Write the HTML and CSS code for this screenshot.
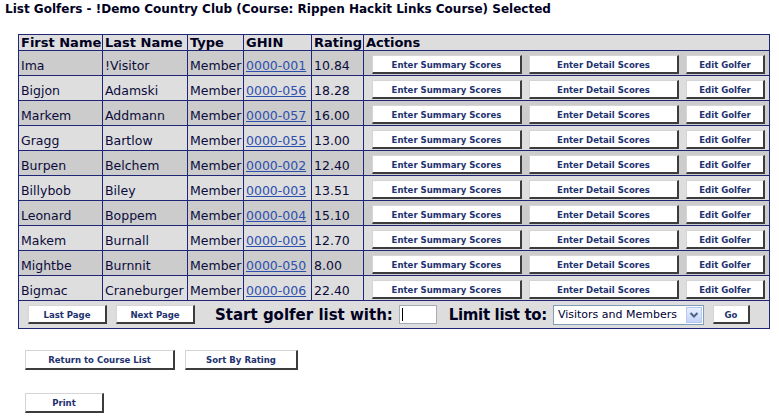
FILE: index.html
```html
<!DOCTYPE html>
<html>
<head>
<meta charset="utf-8">
<title>List Golfers</title>
<link rel="stylesheet" href="styles.css">
</head>
<body>
<h1 class="title">List Golfers - !Demo Country Club (Course: Rippen Hackit Links Course) Selected</h1>
<table class="golfers">
  <colgroup>
    <col class="c-first"><col class="c-last"><col class="c-type"><col class="c-ghin"><col class="c-rating"><col class="c-actions">
  </colgroup>
  <thead>
    <tr><th>First Name</th><th>Last Name</th><th>Type</th><th>GHIN</th><th>Rating</th><th>Actions</th></tr>
  </thead>
  <tbody>
    <tr class="dark"><td>Ima</td><td>!Visitor</td><td>Member</td><td><a href="#">0000-001</a></td><td>10.84</td><td class="actions"><div class="btns"><button class="btn wide">Enter Summary Scores</button><button class="btn wide">Enter Detail Scores</button><button class="btn narrow">Edit Golfer</button></div></td></tr>
    <tr class="light"><td>Bigjon</td><td>Adamski</td><td>Member</td><td><a href="#">0000-056</a></td><td>18.28</td><td class="actions"><div class="btns"><button class="btn wide">Enter Summary Scores</button><button class="btn wide">Enter Detail Scores</button><button class="btn narrow">Edit Golfer</button></div></td></tr>
    <tr class="dark"><td>Markem</td><td>Addmann</td><td>Member</td><td><a href="#">0000-057</a></td><td>16.00</td><td class="actions"><div class="btns"><button class="btn wide">Enter Summary Scores</button><button class="btn wide">Enter Detail Scores</button><button class="btn narrow">Edit Golfer</button></div></td></tr>
    <tr class="light"><td>Gragg</td><td>Bartlow</td><td>Member</td><td><a href="#">0000-055</a></td><td>13.00</td><td class="actions"><div class="btns"><button class="btn wide">Enter Summary Scores</button><button class="btn wide">Enter Detail Scores</button><button class="btn narrow">Edit Golfer</button></div></td></tr>
    <tr class="dark"><td>Burpen</td><td>Belchem</td><td>Member</td><td><a href="#">0000-002</a></td><td>12.40</td><td class="actions"><div class="btns"><button class="btn wide">Enter Summary Scores</button><button class="btn wide">Enter Detail Scores</button><button class="btn narrow">Edit Golfer</button></div></td></tr>
    <tr class="light"><td>Billybob</td><td>Biley</td><td>Member</td><td><a href="#">0000-003</a></td><td>13.51</td><td class="actions"><div class="btns"><button class="btn wide">Enter Summary Scores</button><button class="btn wide">Enter Detail Scores</button><button class="btn narrow">Edit Golfer</button></div></td></tr>
    <tr class="dark"><td>Leonard</td><td>Boppem</td><td>Member</td><td><a href="#">0000-004</a></td><td>15.10</td><td class="actions"><div class="btns"><button class="btn wide">Enter Summary Scores</button><button class="btn wide">Enter Detail Scores</button><button class="btn narrow">Edit Golfer</button></div></td></tr>
    <tr class="light"><td>Makem</td><td>Burnall</td><td>Member</td><td><a href="#">0000-005</a></td><td>12.70</td><td class="actions"><div class="btns"><button class="btn wide">Enter Summary Scores</button><button class="btn wide">Enter Detail Scores</button><button class="btn narrow">Edit Golfer</button></div></td></tr>
    <tr class="dark"><td>Mightbe</td><td>Burnnit</td><td>Member</td><td><a href="#">0000-050</a></td><td>8.00</td><td class="actions"><div class="btns"><button class="btn wide">Enter Summary Scores</button><button class="btn wide">Enter Detail Scores</button><button class="btn narrow">Edit Golfer</button></div></td></tr>
    <tr class="light"><td>Bigmac</td><td>Craneburger</td><td>Member</td><td><a href="#">0000-006</a></td><td>22.40</td><td class="actions"><div class="btns"><button class="btn wide">Enter Summary Scores</button><button class="btn wide">Enter Detail Scores</button><button class="btn narrow">Edit Golfer</button></div></td></tr>
    <tr class="foot">
      <td colspan="6">
        <div class="footbar">
          <button class="btn narrow">Last Page</button>
          <button class="btn narrow">Next Page</button>
          <span class="big-label start">Start golfer list with:</span>
          <div class="textbox" role="textbox"><span class="caret"></span></div>
          <span class="big-label limit">Limit list to:</span>
          <div class="select" role="listbox">
            <span class="select-text">Visitors and Members</span>
            <span class="select-arrow"><svg width="10" height="8" viewBox="0 0 10 8"><path d="M1.5 2 L5 5.5 L8.5 2" fill="none" stroke="#4d6185" stroke-width="2"/></svg></span>
          </div>
          <button class="btn go">Go</button>
        </div>
      </td>
    </tr>
  </tbody>
</table>
<div class="bottom-row">
  <button class="btn wide tall">Return to Course List</button>
  <button class="btn sort tall">Sort By Rating</button>
</div>
<div class="print-row">
  <button class="btn narrow tall">Print</button>
</div>
</body>
</html>
```

FILE: styles.css
```css
html, body {
  background: #ffffff;
}
body {
  margin: 0;
  padding: 1px 0 0 5px;
  font-family: "DejaVu Sans", Verdana, sans-serif;
  color: #0b0b3b;
}
.title {
  margin: 0;
  font-size: 12px;
  line-height: 16px;
  font-weight: bold;
  color: #000022;
}
.golfers {
  margin: 17px 0 0 13px;
  border-collapse: collapse;
  table-layout: fixed;
  width: 751px;
  font-size: 12.5px;
}
.c-first { width: 84px; }
.c-last { width: 85px; }
.c-type { width: 56px; }
.c-ghin { width: 68px; }
.c-rating { width: 52px; }
.c-actions { width: 406px; }
.golfers th, .golfers td {
  border: 1px solid #1f2677;
  text-align: left;
  white-space: nowrap;
  overflow: hidden;
}
.golfers th {
  background: #dddddd;
  height: 15px;
  padding: 0 1px 0 2px;
  line-height: 15px;
  font-size: 13px;
  font-weight: bold;
  color: #000022;
  vertical-align: middle;
}
.golfers tbody tr {
  height: 25px;
}
.golfers td {
  padding: 4px 1px 0 2px;
  vertical-align: middle;
}
.golfers tr.dark td { background: #cccccc; }
.golfers tr.light td { background: #dedede; }
.golfers tr.foot {
  height: 28px;
}
.golfers tr.foot td {
  background: #dddddd;
  padding: 0;
}
.golfers a {
  color: #2d4fae;
  text-decoration: underline;
}
.golfers td.actions { padding: 3px 0 0 0; }
.btns {
  display: flex;
  gap: 7px;
  padding-left: 8px;
  align-items: center;
}
.btn {
  box-sizing: border-box;
  height: 19px;
  padding: 0;
  margin: 0;
  background: #ffffff;
  border-style: solid;
  border-width: 1px 2px 2px 1px;
  border-color: #d4d4d4 #3c3c3c #3c3c3c #d4d4d4;
  font-family: "DejaVu Sans Condensed", "DejaVu Sans", sans-serif;
  font-stretch: condensed;
  font-weight: bold;
  font-size: 9.5px;
  color: #1e3270;
  text-align: center;
  cursor: pointer;
}
.btn.wide { width: 150px; }
.btn.narrow { width: 79px; }
.btn.sort { width: 113px; }
.btn.go { width: 37px; }
.btn.tall { height: 20px; }
.footbar {
  display: flex;
  align-items: center;
  padding-left: 9px;
}
.footbar .btn + .btn { margin-left: 9px; }
.big-label {
  font-size: 15px;
  font-weight: bold;
  color: #000022;
  white-space: nowrap;
}
.start { margin-left: 20px; }
.textbox {
  box-sizing: border-box;
  width: 38px;
  height: 19px;
  margin-left: 6px;
  background: #ffffff;
  border: 1px solid #a5acb5;
  display: flex;
  align-items: center;
  padding-left: 2px;
}
.caret {
  width: 1px;
  height: 13px;
  background: #000000;
}
.limit {
  margin-left: 12px;
  letter-spacing: -0.35px;
}
.select {
  box-sizing: border-box;
  width: 151px;
  height: 20px;
  margin-left: 6px;
  background: #ffffff;
  border: 1px solid #7f9db9;
  display: flex;
  align-items: center;
  justify-content: space-between;
  padding: 0 1px 0 4px;
}
.select-text {
  font-size: 11px;
  color: #000033;
  white-space: nowrap;
}
.select-arrow {
  box-sizing: border-box;
  width: 16px;
  height: 16px;
  border: 1px solid #b5c7ef;
  background: linear-gradient(#e8effd, #c4d4f8);
  display: flex;
  align-items: center;
  justify-content: center;
}
.footbar .go { margin-left: 9px; }
.bottom-row {
  display: flex;
  gap: 10px;
  margin: 21px 0 0 20px;
}
.print-row {
  margin: 21px 0 0 20px;
}
```
